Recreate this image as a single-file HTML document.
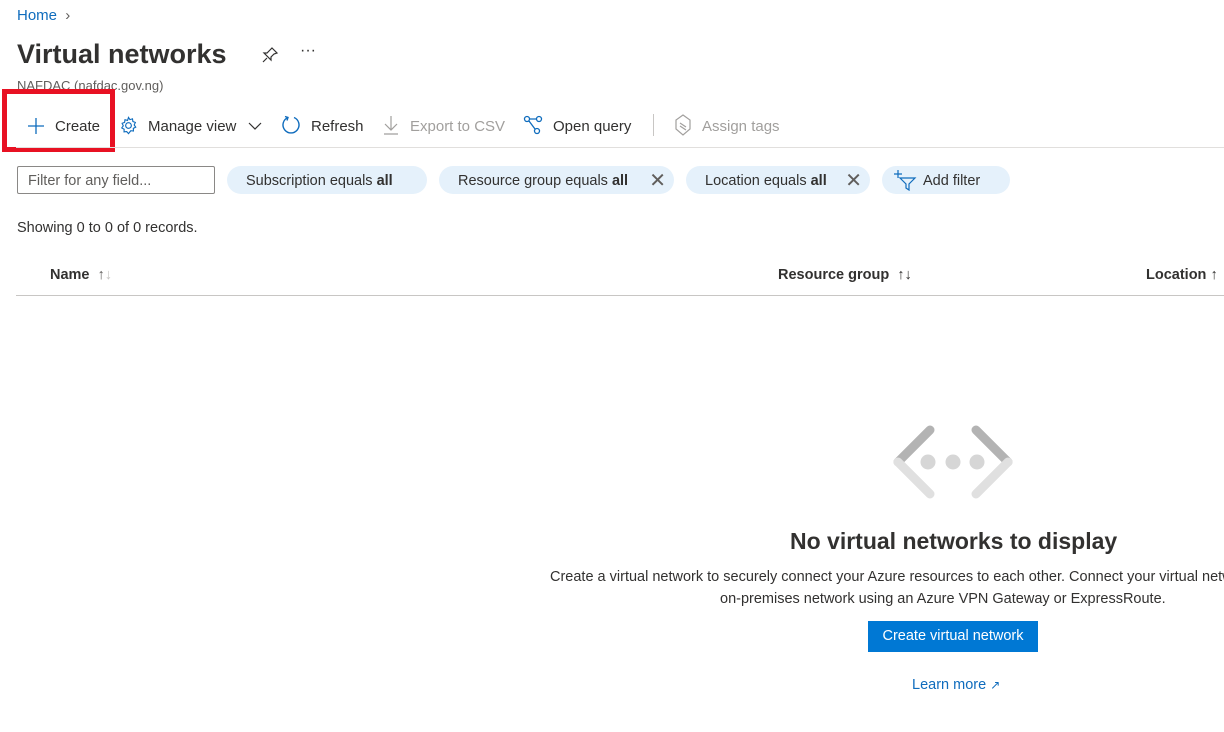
<!DOCTYPE html>
<html><head><style>
body{margin:0;width:1224px;height:732px;overflow:hidden;background:#fff;font-family:"Liberation Sans",sans-serif;color:#323130;position:relative}
.a{position:absolute;white-space:nowrap}
.pill{position:absolute;top:166px;height:28px;border-radius:14px;background:#e5f1fb;font-size:14.5px;line-height:30px;padding:0 0 0 19px;box-sizing:border-box}
.tb{font-size:15px;top:118px}
.g{color:#a19f9d}
</style></head><body>
<div class="a" style="left:17px;top:7px;font-size:15px;color:#0f6cbd">Home <span style="color:#605e5c;margin-left:4px">&#x203A;</span></div>
<div class="a" style="left:17px;top:39px;font-size:27px;font-weight:bold;color:#323130">Virtual networks</div>
<svg class="a" style="left:261px;top:46px" width="18" height="18" viewBox="0 0 18 18" fill="none" stroke="#323130" stroke-width="1.2"><path d="M11 2l5 5-3 1-3 3 0 3-7-7 3 0 3-3z M6 12l-4 4"/></svg>
<div class="a" style="left:300px;top:42px;font-size:16px">···</div>
<div class="a" style="left:17px;top:78px;font-size:13px;color:#605e5c">NAFDAC (nafdac.gov.ng)</div>

<svg class="a" style="left:27px;top:117px" width="18" height="18"><path d="M9 1v16M1 9h16" stroke="#0f6cbd" stroke-width="1.3"/></svg>
<div class="a tb" style="left:55px">Create</div>
<div class="a" style="left:2px;top:89px;width:103px;height:53px;border:5px solid #e81123"></div>
<svg class="a" style="left:119px;top:116px" width="19" height="19" viewBox="0 0 20 20" fill="none" stroke="#0f6cbd" stroke-width="1.2"><circle cx="10" cy="10" r="3"/><path d="M10 1.5l1.5 2.3 2.7-.8.4 2.8 2.6 1-1.2 2.6 1.6 2.3-2.5 1.3.1 2.8-2.8-.3L10 18.5l-1.9-2.1-2.8.3.1-2.8-2.5-1.3 1.6-2.3L3.3 7.7l2.6-1 .4-2.8 2.7.8z"/></svg>
<div class="a tb" style="left:148px">Manage view</div>
<svg class="a" style="left:248px;top:121px" width="14" height="10"><path d="M1 2l6 6 6-6" stroke="#323130" fill="none" stroke-width="1.2"/></svg>
<svg class="a" style="left:281px;top:115px" width="20" height="20" viewBox="0 0 20 20" fill="none" stroke="#0f6cbd" stroke-width="1.4"><path d="M7 2.5A8 8 0 1 0 13 2.5M4 1.5l3 1-1 3"/></svg>
<div class="a tb" style="left:311px">Refresh</div>
<svg class="a" style="left:383px;top:115px" width="16" height="20"><path d="M8 1v14M2 9l6 6 6-6M1 19h14" stroke="#a19f9d" fill="none" stroke-width="1.2"/></svg>
<div class="a tb g" style="left:410px">Export to CSV</div>
<svg class="a" style="left:523px;top:115px" width="20" height="20" fill="none" stroke="#0f6cbd" stroke-width="1.3"><circle cx="4" cy="4" r="2.5"/><circle cx="16" cy="4" r="2.5"/><circle cx="14" cy="16" r="2.5"/><path d="M6.5 4h7M6 6l6 8"/></svg>
<div class="a tb" style="left:553px">Open query</div>
<div class="a" style="left:653px;top:114px;width:1px;height:22px;background:#c8c6c4"></div>
<svg class="a" style="left:674px;top:114px" width="18" height="22" fill="none" stroke="#a19f9d" stroke-width="1.2"><path d="M9 1l7 5v9l-7 6-7-6V6z M6 9l6 4M6 12l6 4"/></svg>
<div class="a tb g" style="left:702px">Assign tags</div>
<div class="a" style="left:16px;top:147px;width:1208px;height:1px;background:#e1dfdd"></div>

<div class="a" style="left:17px;top:166px;width:198px;height:28px;border:1px solid #8a8886;box-sizing:border-box;border-radius:2px;font-size:14.5px;line-height:28px;padding-left:10px;color:#605e5c">Filter for any field...</div>
<div class="pill" style="left:227px;width:200px">Subscription equals <b>all</b></div>
<div class="pill" style="left:439px;width:235px">Resource group equals <b>all</b><span style="position:absolute;right:8px;font-size:20px;font-weight:300;color:#605e5c">&#x2715;</span></div>
<div class="pill" style="left:686px;width:184px">Location equals <b>all</b><span style="position:absolute;right:8px;font-size:20px;color:#605e5c">&#x2715;</span></div>
<div class="pill" style="left:882px;width:128px;padding-left:41px">Add filter</div>
<svg class="a" style="left:893px;top:169px" width="24" height="22" fill="none" stroke="#0f6cbd" stroke-width="1.2"><path d="M1 5h8M5 1v8M7 9h15l-6 6v6l-3-2v-4z"/></svg>

<div class="a" style="left:17px;top:220px;font-size:14.5px">Showing 0 to 0 of 0 records.</div>
<div class="a" style="left:50px;top:267px;font-size:14.5px;font-weight:bold">Name <span style="font-weight:normal;color:#605e5c;margin-left:4px">↑<span style="color:#c8c6c4">↓</span></span></div>
<div class="a" style="left:778px;top:267px;font-size:14.5px;font-weight:bold">Resource group <span style="font-weight:normal;margin-left:4px">↑↓</span></div>
<div class="a" style="left:1146px;top:267px;font-size:14.5px;font-weight:bold">Location <span style="font-weight:normal">↑</span></div>
<div class="a" style="left:16px;top:295px;width:1208px;height:1px;background:#c8c6c4"></div>

<svg class="a" style="left:890px;top:424px" width="126" height="76">
<path d="M40 6L8 38" stroke="#b3b3b3" stroke-width="9" stroke-linecap="round"/>
<path d="M8 38L40 70" stroke="#e0e0e0" stroke-width="9" stroke-linecap="round"/>
<path d="M86 6L118 38" stroke="#b3b3b3" stroke-width="9" stroke-linecap="round"/>
<path d="M118 38L86 70" stroke="#e0e0e0" stroke-width="9" stroke-linecap="round"/>
<circle cx="38" cy="38" r="7.5" fill="#d6d6d6"/><circle cx="63" cy="38" r="7.5" fill="#d6d6d6"/><circle cx="87" cy="38" r="7.5" fill="#d6d6d6"/>
</svg>
<div class="a" style="left:790px;top:528px;font-size:23px;font-weight:bold">No virtual networks to display</div>
<div class="a" style="left:550px;top:569px;font-size:14.5px;width:674px;overflow:hidden">Create a virtual network to securely connect your Azure resources to each other. Connect your virtual networks to your</div>
<div class="a" style="left:720px;top:591px;font-size:14.5px">on-premises network using an Azure VPN Gateway or ExpressRoute.</div>
<div class="a" style="left:868px;top:621px;width:170px;height:31px;background:#0078d4;color:#fff;font-size:14.5px;line-height:31px;text-align:center">Create virtual network</div>
<div class="a" style="left:912px;top:677px;font-size:14.5px;color:#0f6cbd">Learn more <span style="font-size:12px">&#x2197;</span></div>
</body></html>
